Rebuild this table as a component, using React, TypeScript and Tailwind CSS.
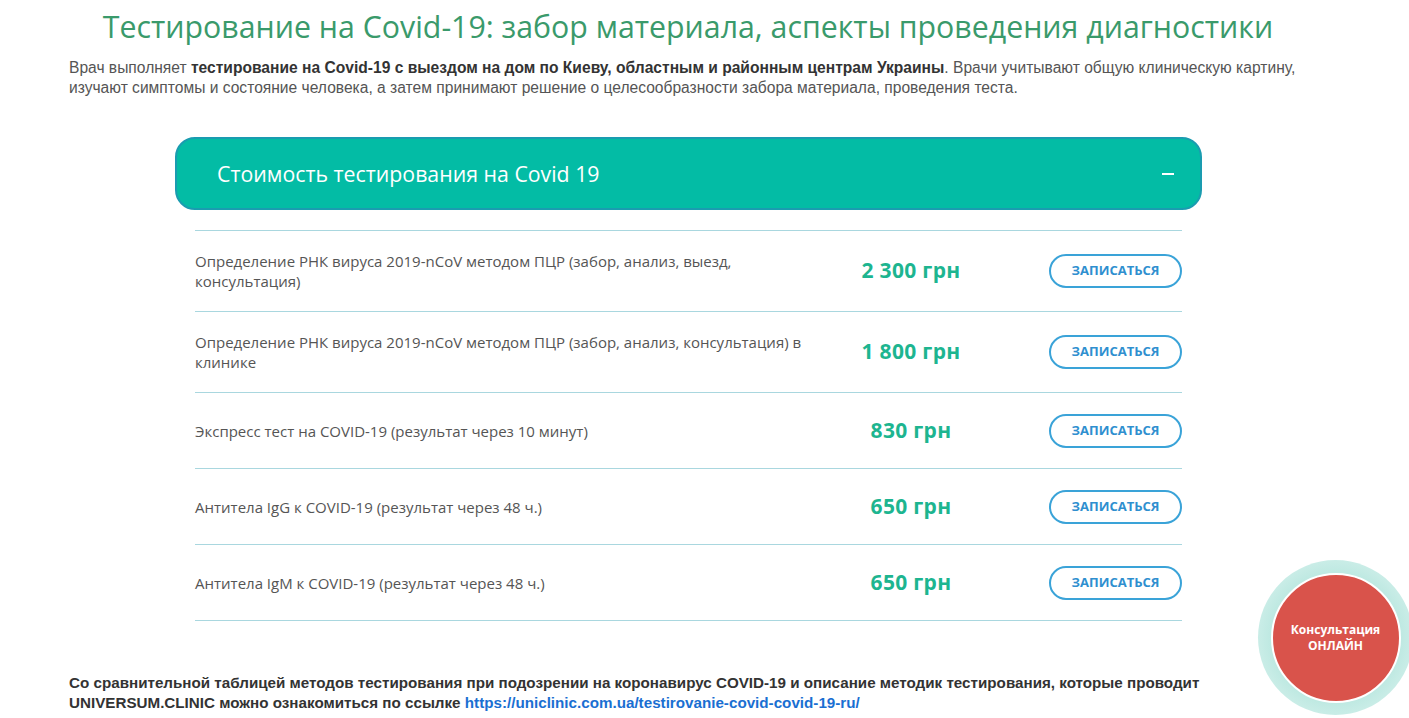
import React from 'react'

const rows = [
  {
    name: 'Определение РНК вируса 2019-nCoV методом ПЦР (забор, анализ, выезд, консультация)',
    price: '2 300 грн',
    h: 'h-[81px]',
  },
  {
    name: 'Определение РНК вируса 2019-nCoV методом ПЦР (забор, анализ, консультация) в клинике',
    price: '1 800 грн',
    h: 'h-[81px]',
  },
  { name: 'Экспресс тест на COVID-19 (результат через 10 минут)', price: '830 грн', h: 'h-[76px]' },
  { name: 'Антитела IgG к COVID-19 (результат через 48 ч.)', price: '650 грн', h: 'h-[76px]' },
  { name: 'Антитела IgM к COVID-19 (результат через 48 ч.)', price: '650 грн', h: 'h-[76px]' },
]

export default function App() {
  return (
    <div className="relative w-[1409px] h-[718px] overflow-hidden bg-white font-['Open_Sans',sans-serif]">
      <h1 className="pt-[8px] pr-[33px] text-center text-[30.3px] leading-[38px] text-[#3a9a6b]">
        Тестирование на Covid-19: забор материала, аспекты проведения диагностики
      </h1>

      <p className="mt-[12px] px-[69px] text-[15.6px] leading-[20px] text-[#555] font-['Liberation_Sans',sans-serif]">
        <span>Врач выполняет </span>
        <b className="text-[#333]">тестирование на Covid-19 с выездом на дом по Киеву, областным и районным центрам Украины</b>
        <span>. Врачи учитывают общую клиническую картину, изучают симптомы и состояние человека, а затем принимают решение о целесообразности забора материала, проведения теста.</span>
      </p>

      <div className="mx-[175px] mt-[39px] w-[1027px]">
        <div className="flex h-[73px] items-center justify-between rounded-[20px] border-2 border-[#1a9cb0] bg-[#03bca5] pl-[40px] pr-[26px]">
          <span className="text-[21.3px] font-medium text-white">Стоимость тестирования на Covid 19</span>
          <span className="block h-[2px] w-[12px] bg-white" />
        </div>

        <div className="mx-[20px] mt-[20px] border-t border-[#a9d7df]">
          {rows.map((r, i) => (
            <div key={i} className={`flex items-center border-b border-[#a9d7df] ${r.h}`}>
              <div className="w-[616px] text-[15px] leading-[20px] text-[#555]">{r.name}</div>
              <div className="w-[200px] text-center text-[21px] tracking-[0.3px] font-bold text-[#1db590]">{r.price}</div>
              <div className="flex flex-1 justify-end">
                <button className="h-[34px] w-[133px] rounded-full border-2 border-[#3aa3d8] text-[13px] font-bold text-[#2f8fcf]">
                  ЗАПИСАТЬСЯ
                </button>
              </div>
            </div>
          ))}
        </div>
      </div>

      <p className="mt-[52px] w-[1232px] pl-[69px] text-[15.2px] leading-[20px] font-bold text-[#333] font-['Liberation_Sans',sans-serif]">
        <span>Со сравнительной таблицей методов тестирования при подозрении на коронавирус COVID-19 и описание методик тестирования, которые проводит UNIVERSUM.CLINIC можно ознакомиться по ссылке </span>
        <a href="#" className="text-[#1a6fd2]">https://uniclinic.com.ua/testirovanie-covid-covid-19-ru/</a>
      </p>

      <div className="absolute left-[1258px] top-[560px] flex h-[155px] w-[155px] items-center justify-center rounded-full bg-[radial-gradient(circle,#bfe9e2_60%,#e6f7f4_100%)]">
        <div className="flex h-[130px] w-[130px] items-center justify-center rounded-full border-2 border-white bg-[#d9534b] text-center text-[12px] leading-[16px] font-bold text-white">
          Консультация
          <br />
          ОНЛАЙН
        </div>
      </div>
    </div>
  )
}
